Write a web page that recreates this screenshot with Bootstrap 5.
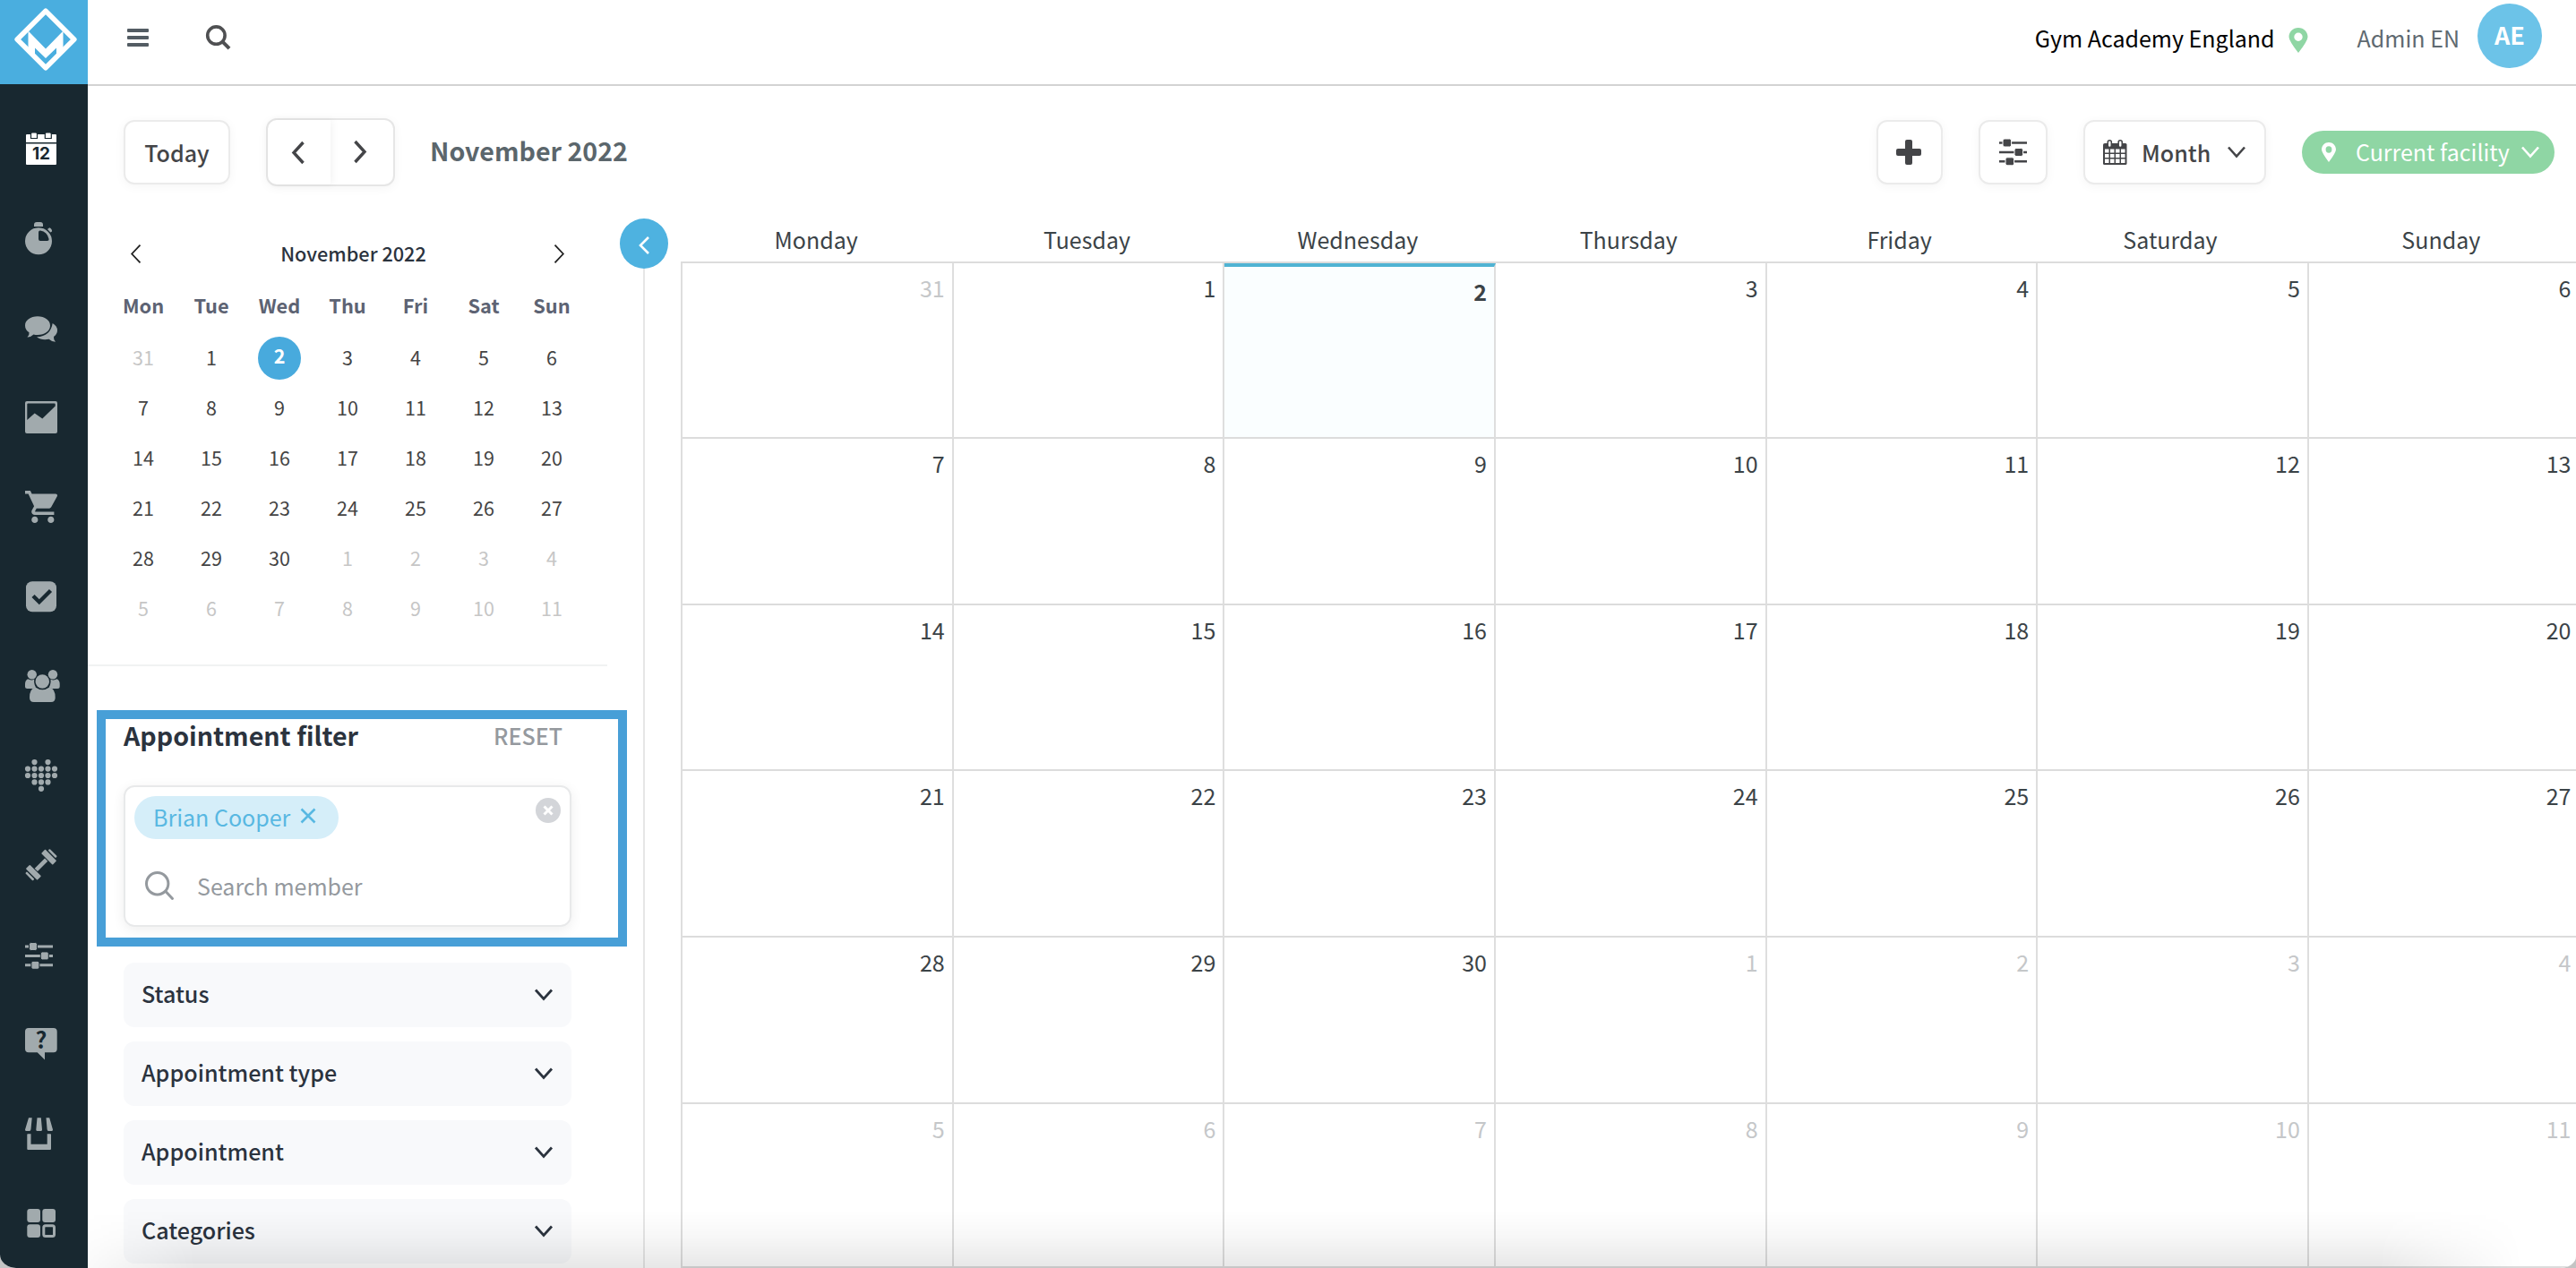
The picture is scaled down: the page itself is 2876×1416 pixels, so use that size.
<!DOCTYPE html>
<html lang="en">
<head>
<meta charset="utf-8">
<title>Calendar – November 2022</title>
<meta name="viewport" content="width=device-width, initial-scale=1">
<link href="https://cdn.jsdelivr.net/npm/bootstrap@5.3.0/dist/css/bootstrap.min.css" rel="stylesheet">
<style>
  html, body { height: 100%; }
  body { font-family: "Noto Sans CJK SC", "Noto Sans", sans-serif; font-size: 25px; line-height: 1.4; color: #3b4347; background: #c4c4c4; overflow: hidden; }
  svg { display: block; flex: none; overflow: visible; }
  .app { height: 1416px; background: #fff; border-radius: 0 0 18px 18px / 0 0 13px 15px; }
  .side { width: 98px; background: #182830; color: #a1aaad; }
  .brand { height: 94px; background: #4aaedf; }
  .side-nav { padding: 54px 0 0 28px; gap: 64px; }
  .side-nav .on { color: #fff; }
  .top { height: 96px; border-bottom: 2px solid #d3d3d3; padding: 0 38px 10px 44px; }
  .top .find { margin-left: 64px; }
  .top .who { color: #5f6a71; margin-left: 55px; margin-right: 20px; }
  .top .place { margin-left: 15px; margin-top: 6px; }
  .avatar { width: 72px; height: 72px; background: #6cc3e8; font-size: 27px; margin-top: -5px; line-height: 70px; }
  .tools { height: 148px; padding: 0 24px 0 40px; }
  .tool { height: 72px; border: 2px solid #ebebeb; border-radius: 12px; background: #fff; box-shadow: 0 2px 12px rgba(0,0,0,.045); color: #444548; font-weight: 500; font-size: 25px; padding: 0; line-height: 1; }
  .t-today { width: 119px; }
  .t-add { width: 74px; padding-right: 2px; }
  .t-opts { width: 77px; margin-left: 40px; padding-right: 1px; }
  .t-view { width: 204px; margin-left: 40px; padding-left: 20px; }
  .t-view span { margin: 0 19px 0 16px; }
  .pager { height: 76px; width: 144px; border: 2px solid #e6e6e6; margin-left: 40px; }
  .pager > span { width: 70px; height: 72px; border-radius: 10px; padding-right: 3px; }
  .pager > span:first-child { box-shadow: 2px 0 8px rgba(0,0,0,.05); border-radius: 10px 0 0 10px; }
  .period { color: #5b666c; font-size: 28.6px; font-weight: 700; margin-left: 39px; line-height: 1; padding-bottom: 3px; }
  .facility { width: 282px; height: 48px; border-radius: 24px; background: #8fd6a4; color: #fff; margin-left: 40px; padding: 0 17px 0 22px; }
  .facility span { margin-left: 22px; line-height: 1; padding-bottom: 1px; }
  .panel { width: 622px; border-right: 2px solid #e6e6e6; }
  .mini-head { height: 78px; width: 484px; margin-left: 48px; font-size: 21.7px; font-weight: 500; color: #2b333e; }
  .mini-head span { padding-left: 13px; }
  .mini { display: grid; grid-template-columns: repeat(7, 76px); margin-left: 24px; font-size: 21.5px; text-align: center; }
  .mini b { height: 48px; line-height: 38px; color: #5d6373; font-weight: 700; font-size: 21.8px; }
  .mini span { height: 56px; line-height: 58.500px; color: #444; }
  .mini .out { color: #c6c6c6; }
  .mini .now { width: 48px; height: 48px; line-height: 41px; margin: 6px auto 0; border-radius: 50%; background: #48aadd; color: #fff; font-weight: 700; }
  .rule { width: 580px; height: 2px; background: #f1f2f2; margin-top: 36px; }
  .focus-box { width: 592px; height: 264px; border: 10px solid #489fd7; margin: 49px 0 0 10px; padding-left: 20px; }
  .focus-head { height: 35px; width: 490px; color: #2b333e; }
  .focus-head strong { font-size: 28.600px; line-height: 36px; }
  .focus-head em { font-style: normal; font-weight: 500; color: #95999e; line-height: 36px; font-size: 25px; }
  .picker { width: 500px; height: 158px; margin-top: 39px; border: 2px solid #e8e9ea; border-radius: 12px; box-shadow: 0 3px 14px rgba(0,0,0,.07); padding: 10px; }
  .chip { width: 228px; height: 48px; border-radius: 24px; background: #d5eef9; color: #58b8e2; padding: 0 0 1px 21px; }
  .chip svg { margin-left: 11px; }
  .ask { color: #94999e; padding-left: 12px; gap: 26px; margin-top: 34px; height: 36px; }
  .facets { margin: 18px 0 0 40px; gap: 16px; }
  .facet { width: 500px; height: 72px; border-radius: 12px; background: #f8f9fb; color: #2b333e; font-weight: 500; padding: 0 21px 2px 20px; font-size: 25.100px; }
  .toggle { left: -28px; top: 0; width: 54px; height: 56px; border-radius: 50%; background: #4eb2e0; padding-right: 1px; }
  .month { width: 2120.500px; margin-left: 40px; }
  .month-in { border-left: 2px solid #dedede; }
  .names { display: grid; grid-template-columns: repeat(7, 1fr); height: 50px; text-align: center; padding: 5px 4px 0 0; line-height: 36px; border-bottom: 2px solid #dcdcdc; }
  .days { display: grid; grid-template-columns: repeat(7, 1fr); grid-template-rows: 196px 186px 185px 186px 186px 183px; }
  .days div { border-right: 2px solid #dedede; border-bottom: 2px solid #dcdcdc; text-align: right; padding: 8px 8px 0 0; line-height: 38px; }
  .days .out { color: #c5c7c9; }
  .days .now { background: #fafeff; border-top: 4px solid #4fb3d3; font-weight: 700; }
  .fade-foot { position: fixed; left: 98px; right: 0; bottom: 0; height: 64px; pointer-events: none; background: linear-gradient(rgba(0,0,0,0), rgba(0,0,0,.03) 45%, rgba(0,0,0,.095)); -webkit-mask-image: linear-gradient(90deg, rgba(0,0,0,.2), #000 120px, #000 calc(100% - 220px), transparent calc(100% - 60px)); }
</style>
<script src="https://cdn.jsdelivr.net/npm/bootstrap@5.3.0/dist/js/bootstrap.bundle.min.js"></script>
</head>
<body>
<div class="app d-flex overflow-hidden">
  <aside class="side flex-shrink-0">
    <div class="brand">
      <svg width="98" height="94"><path d="M51 12.200 82.800 44 51 75.800 19.200 44Z" fill="none" stroke="#fff" stroke-width="5.600" stroke-linejoin="round"/><path fill="#fff" d="M31.500 34.500 51 54.500 70.500 34.500V55L63 63V53.600L51 65 39 53.600V63L31.500 55Z"/></svg>
    </div>
    <nav class="side-nav d-flex flex-column">
      <svg class="on" width="40" height="36" fill="currentColor"><path d="M2 2H34Q35 2 35 3V11H1V3Q1 2 2 2ZM1 12.600H35V35Q35 36 34 36H2Q1 36 1 35Z"/><path d="M6.500 1.500Q6.500 0 8 0H12Q13.500 0 13.500 1.500V6.500H6.500ZM22.300 1.500Q22.300 0 23.800 0H27.800Q29.300 0 29.300 1.500V6.500H22.300Z" stroke="#182830" stroke-width="1.200"/><text x="18" y="30" text-anchor="middle" font-family="Inter, sans-serif" font-weight="700" font-size="19" fill="#182830">12</text></svg>
      <svg width="40" height="36" fill="currentColor"><path d="M10 5V3Q10 0 13 0H17Q20 0 20 3V5Z"/><path fill-rule="evenodd" d="M15 6.300A15 15 0 1 1 15 36.300A15 15 0 1 1 15 6.300ZM15 11.500V19Q15 21 17 21H24.700Q27 21 26.600 19Q24.800 10.700 17 9.500Q15 9.300 15 11.500Z"/><path d="M25 8 27.200 6.200Q30.500 7.800 30 10.600L28.300 11.600Z"/></svg>
      <svg width="40" height="36" fill="currentColor"><path d="M14 5.300C22 5.300 28 9.600 28 15.500S22 26 14 26Q11.500 26 9.500 25.500Q6 28.800 2.500 28.500Q5 26 4.500 23.300Q0 20.300 0 15.500C0 9.600 6 5.300 14 5.300Z"/><path d="M30.700 13Q36 16 36 21Q36 25 32 28Q31.500 31 34 33.700Q29.500 33.700 26.700 30.800Q18 32.300 13 28.300Q28.500 27.500 30.700 13Z"/></svg>
      <svg width="40" height="36" fill="currentColor"><path fill-rule="evenodd" d="M2 0H34Q36 0 36 2V34Q36 36 34 36H2Q0 36 0 34V2Q0 0 2 0ZM2.300 3.500V21L10.700 13.500 19.300 19.500 33.700 5.500V3.500Q33.700 2.500 32.700 2.500H3.300Q2.300 2.500 2.300 3.500Z"/></svg>
      <svg width="40" height="36" fill="currentColor"><g transform="scale(1.8) translate(-1 -2)"><path d="M7 18c-1.100 0-1.990.9-1.990 2S5.900 22 7 22s2-.9 2-2-.9-2-2-2zM1 2v2h2l3.600 7.590-1.350 2.450c-.16.28-.25.61-.25.96 0 1.100.9 2 2 2h12v-2H7.420c-.14 0-.25-.11-.25-.25l.03-.12.9-1.630h7.450c.75 0 1.410-.41 1.750-1.030l3.580-6.490c.08-.14.12-.31.12-.48 0-.55-.45-1-1-1H5.210l-.94-2H1zm16 16c-1.100 0-1.990.9-1.990 2s.89 2 1.990 2 2-.9 2-2-.9-2-2-2z"/></g></svg>
      <svg width="40" height="36" fill="currentColor"><rect x="1" y="1.300" width="34" height="34" rx="7"/><path d="M9 17.500 15.800 24.200 28.500 11.500" fill="none" stroke="#182830" stroke-width="4.400"/></svg>
      <svg width="40" height="36" fill="currentColor"><circle cx="7.700" cy="5.300" r="5.200"/><circle cx="31" cy="5.300" r="5.200"/><path d="M3 10.300Q7 12.500 10.300 10.500Q9.500 15.500 12 19.500Q10 21 8 21H2.500Q0 21 0 18.500V16Q0 12 3 10.300ZM35.700 10.300Q31.700 12.500 28.400 10.500Q29.200 15.500 26.700 19.500Q28.700 21 30.700 21H36.200Q38.700 21 38.700 18.500V16Q38.700 12 35.700 10.300Z"/><circle cx="19.300" cy="13" r="8.600" fill="#182830"/><circle cx="19.300" cy="13" r="7.700"/><path d="M11.500 19.500Q19.300 25 27.200 19.500Q33.700 21 33.700 31Q33.700 36 29 36H9.700Q5 36 5 31Q5 21 11.500 19.500Z"/></svg>
      <svg width="40" height="36" fill="none" stroke="currentColor" stroke-width="6.200" stroke-linecap="round" stroke-dasharray="0 7.500"><path d="M10.500 3.100H10.600M25.500 3.100H25.600M3 10.600H33.100M3 18H33.100M10.500 25.400H25.600M18 32.800H18.100"/></svg>
      <svg width="40" height="36" fill="currentColor"><g transform="translate(18 17.700) rotate(-45)"><rect x="-8" y="-2.300" width="16" height="4.600"/><rect x="-15.300" y="-9" width="6.300" height="18" rx=".8"/><rect x="9" y="-9" width="6.300" height="18" rx=".8"/><rect x="-19.300" y="-6" width="2.600" height="12" rx="1"/><rect x="16.700" y="-6" width="2.600" height="12" rx="1"/></g></svg>
      <svg width="40" height="36" fill="currentColor"><path d="M0 7.600H31V10.600H0ZM0 18H31V21H0ZM0 28.300H31V31.300H0Z"/><g stroke="#182830"><rect x="4.500" y="4.500" width="9" height="9" rx="2"/><rect x="17.300" y="14.900" width="9" height="9" rx="2"/><rect x="6.900" y="25.300" width="9" height="9" rx="2"/></g></svg>
      <svg width="40" height="36" fill="currentColor"><path d="M4 0H31.700Q35.700 0 35.700 4V23.300Q35.700 27.300 31.700 27.300H22V35.500L13.700 27.300H4Q0 27.300 0 23.300V4Q0 0 4 0Z"/><text x="18" y="23.300" text-anchor="middle" font-weight="700" font-size="25" fill="#182830">?</text></svg>
      <svg width="40" height="36" fill="currentColor"><path d="M4 .3H7.700L6.500 13Q6.300 14.900 5 14.900H1Q0 14.900 0 13.500ZM13.500 .3H17.800L19 13.500Q19 14.900 18 14.900H13.300Q12.200 14.900 12.300 13.500ZM23.500 .3H27.200L31 13.500Q31 14.900 30 14.900H26Q24.800 14.900 24.600 13Z"/><path d="M3 18.300H6.500V29.700H24.700V18.300H28.300Q29 18.300 29 19V35Q29 36 28 36H3.300Q2.300 36 2.300 35V19Q2.300 18.300 3 18.300Z"/></svg>
      <svg width="40" height="36" fill="currentColor"><rect x="2.300" y="2" width="14.700" height="15" rx="3"/><rect x="19.300" y="2" width="14.700" height="15" rx="3"/><rect x="2.300" y="19.300" width="14.700" height="14.700" rx="3"/><rect x="20.800" y="20.800" width="11.700" height="11.700" rx="2" fill="none" stroke="currentColor" stroke-width="3"/></svg>
    </nav>
  </aside>

  <main class="flex-grow-1 d-flex flex-column overflow-hidden">
    <header class="top d-flex align-items-center flex-shrink-0">
      <svg width="24" height="20" fill="#535c63"><rect width="24" height="4" rx="1"/><rect y="8" width="24" height="4" rx="1"/><rect y="16" width="24" height="4" rx="1"/></svg>
      <svg class="find" width="28" height="28" fill="none" stroke="#4f5052" stroke-width="3.600"><circle cx="11.400" cy="11.600" r="9.700"/><path d="M18.500 18.700 26 26.200" stroke-width="4"/></svg>
      <span class="text-black ms-auto">Gym Academy England</span>
      <svg class="place" width="22" height="28" viewBox="0 0 22 28" fill="#8fd6a4"><path fill-rule="evenodd" d="M11 0C17 0 21.500 4.500 21.500 10.200Q21.500 14.500 11 28Q.5 14.500 .5 10.200C.5 4.500 5 0 11 0ZM11 5.500A4.700 4.700 0 1 0 11 14.900A4.700 4.700 0 1 0 11 5.500Z"/></svg>
      <span class="who">Admin EN</span>
      <span class="avatar rounded-circle text-white text-center fw-bold">AE</span>
    </header>

    <div class="tools d-flex align-items-center flex-shrink-0">
      <button class="tool t-today">Today</button>
      <div class="tool pager d-flex align-items-center">
        <span class="d-flex align-items-center justify-content-center"><svg width="17" height="26" fill="none" stroke="#444548" stroke-width="3.400"><path d="M14.500 2 4 13.500 14.500 25"/></svg></span>
        <span class="d-flex align-items-center justify-content-center"><svg width="17" height="26" fill="none" stroke="#444548" stroke-width="3.400"><path d="M2.500 1 13 12.500 2.500 24"/></svg></span>
      </div>
      <div class="period">November 2022</div>
      <button class="tool t-add ms-auto d-flex align-items-center justify-content-center"><svg width="28" height="28" fill="#444548"><rect x="10" width="8" height="28" rx="2"/><rect y="10" width="28" height="8" rx="2"/></svg></button>
      <button class="tool t-opts d-flex align-items-center justify-content-center"><svg width="31" height="30" fill="#444548"><path d="M0 3.200H31V5.800H0ZM0 13.700H31V16.300H0ZM0 24H31V26.600H0Z"/><g stroke="#fff"><rect x="4" y="0" width="9.600" height="9" rx="2"/><rect x="17" y="10.500" width="9.600" height="9" rx="2"/><rect x="7" y="20.800" width="9.600" height="9" rx="2"/></g></svg></button>
      <button class="tool t-view d-flex align-items-center">
        <svg width="27" height="28"><path fill="#444548" d="M2 4H25Q26.500 4 26.500 5.500V26.500Q26.500 28 25 28H1.500Q0 28 0 26.500V5.500Q0 4 2 4Z"/><path fill="#fff" d="M2 10.500H6.500V14.500H2ZM8 10.500H12.500V14.500H8ZM14 10.500H18.500V14.500H14ZM20 10.500H24.500V14.500H20ZM2 16H6.500V20H2ZM8 16H12.500V20H8ZM14 16H18.500V20H14ZM20 16H24.500V20H20ZM2 21.500H6.500V26H2ZM8 21.500H12.500V26H8ZM14 21.500H18.500V26H14ZM20 21.500H24.500V26H20Z"/><path d="M7.300 2.800V6.500M19.200 2.800V6.500" stroke="#444548" stroke-width="5.600" stroke-linecap="round"/><path d="M7.300 2.800V6.500M19.200 2.800V6.500" stroke="#fff" stroke-width="2.500" stroke-linecap="round"/></svg>
        <span>Month</span>
        <svg width="20" height="14" fill="none" stroke="#444548" stroke-width="2.600"><path d="M1 1.500 10 11.500 19 1.500"/></svg>
      </button>
      <div class="facility d-flex align-items-center">
        <svg width="16" height="22" viewBox="0 0 22 28" preserveAspectRatio="none" fill="#fff"><path fill-rule="evenodd" d="M11 0C17 0 22 4.500 22 10.200Q22 14.500 11 28Q0 14.500 0 10.200C0 4.500 5 0 11 0ZM11 5.500A4.700 4.700 0 1 0 11 14.900A4.700 4.700 0 1 0 11 5.500Z"/></svg>
        <span>Current facility</span>
        <svg width="20" height="14" class="ms-auto" fill="none" stroke="#fff" stroke-width="2.600"><path d="M1 1.500 10 11.500 19 1.500"/></svg>
      </div>
    </div>

    <div class="d-flex flex-grow-1">
      <section class="panel flex-shrink-0">
        <div class="mini-head d-flex align-items-center justify-content-between">
          <svg width="11" height="21" fill="none" stroke="#222" stroke-width="1.800"><path d="M10.500 .7 1.200 10.500 10.500 20.300"/></svg>
          <span>November 2022</span>
          <svg width="11" height="21" fill="none" stroke="#222" stroke-width="1.800"><path d="M.5 .7 9.800 10.500 .5 20.300"/></svg>
        </div>
        <div class="mini" id="mini"><b>Mon</b><b>Tue</b><b>Wed</b><b>Thu</b><b>Fri</b><b>Sat</b><b>Sun</b></div>
        <div class="rule"></div>
        <div class="focus-box">
          <div class="focus-head d-flex justify-content-between"><strong>Appointment filter</strong><em>RESET</em></div>
          <div class="picker">
            <div class="d-flex justify-content-between">
              <span class="chip d-flex align-items-center">Brian Cooper<svg width="18" height="18" class="mb-1" fill="none" stroke="#58b8e2" stroke-width="2.600"><path d="M1.500 1.500 16.500 16.500M16.500 1.500 1.500 16.500"/></svg></span>
              <svg width="28" height="30"><circle cx="14" cy="16" r="14" fill="#d3d5d9"/><path d="M9.500 11.500 18.500 20.500M18.500 11.500 9.500 20.500" stroke="#fff" stroke-width="3"/></svg>
            </div>
            <div class="ask d-flex align-items-center"><svg width="32" height="32" fill="none" stroke="#94999e" stroke-width="3" stroke-linecap="round"><circle cx="13.700" cy="13.700" r="12.200"/><path d="M23 22.500 30.500 30.500"/></svg>Search member</div>
          </div>
        </div>
        <div class="facets d-flex flex-column" id="facets"></div>
      </section>

      <section class="position-relative">
        <div class="toggle position-absolute d-flex align-items-center justify-content-center"><svg width="12" height="20" class="mt-1" fill="none" stroke="#fff" stroke-width="2.600"><path d="M11 1 2 10 11 19"/></svg></div>
        <div class="month">
          <div class="names"><span>Monday</span><span>Tuesday</span><span>Wednesday</span><span>Thursday</span><span>Friday</span><span>Saturday</span><span>Sunday</span></div>
          <div class="month-in days" id="days"></div>
        </div>
      </section>
    </div>
  </main>
</div>
<div class="fade-foot"></div>

<script>
  // Six weeks starting on Monday 31 October 2022
  const mini = document.getElementById('mini'), days = document.getElementById('days');
  for (let i = 0; i < 42; i++) {
    const d = new Date(2022, 9, 31 + i);
    const cls = i === 2 ? 'now' : d.getMonth() !== 10 ? 'out' : '';
    mini.insertAdjacentHTML('beforeend', `<span class="${cls}">${d.getDate()}</span>`);
    days.insertAdjacentHTML('beforeend', `<div class="${cls}">${d.getDate()}</div>`);
  }
  document.getElementById('facets').innerHTML = ['Status', 'Appointment type', 'Appointment', 'Categories'].map(t =>
    `<div class="facet d-flex align-items-center justify-content-between">${t}<svg width="20" height="14" fill="none" stroke="#2b333e" stroke-width="2.800"><path d="M1 2.500 10 12.500 19 2.500"/></svg></div>`).join('');
</script>
</body>
</html>
